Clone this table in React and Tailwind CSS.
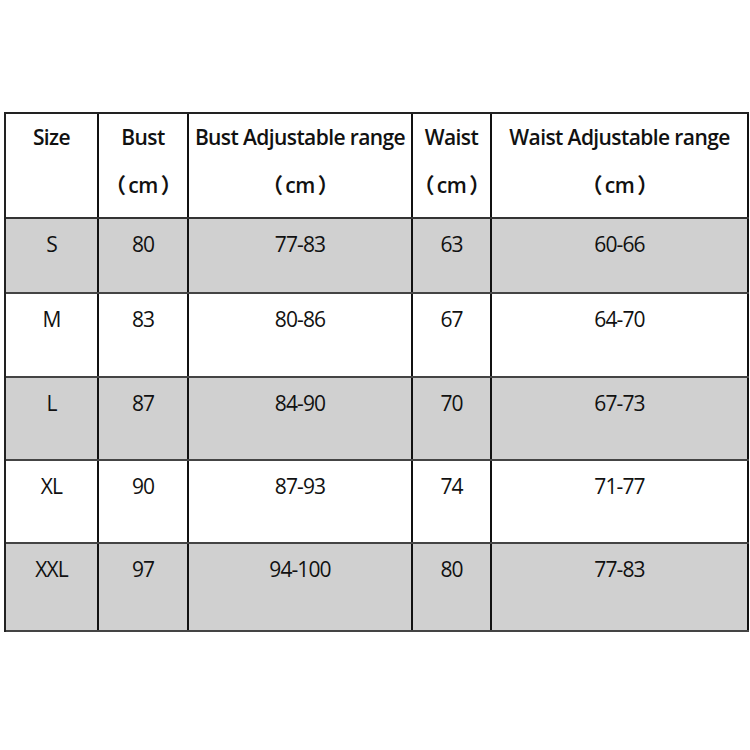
const headers = [
  ["Size", false],
  ["Bust", true],
  ["Bust Adjustable range", true],
  ["Waist", true],
  ["Waist Adjustable range", true],
];

const rows = [
  { cells: ["S", "80", "77-83", "63", "60-66"], h: "h-[75px]", gray: true },
  { cells: ["M", "83", "80-86", "67", "64-70"], h: "h-[84px]", gray: false },
  { cells: ["L", "87", "84-90", "70", "67-73"], h: "h-[83px]", gray: true },
  { cells: ["XL", "90", "87-93", "74", "71-77"], h: "h-[83px]", gray: false },
  { cells: ["XXL", "97", "94-100", "80", "77-83"], h: "h-[88px]", gray: true },
];

const widths = ["w-[93px]", "w-[90px]", "w-[224px]", "w-[79px]", "w-[257px]"];

const font = { fontFamily: '"Open Sans", "Noto Sans CJK SC", sans-serif' };

export default function App() {
  return (
    <div className="w-[750px] h-[750px] bg-white pt-[112px] pl-[4px]" style={font}>
      <div className="w-[745px] border-t-2 border-l-2 border-[#222] text-[#111]">
        <div className="flex h-[105px] border-b-2 border-[#333]">
          {headers.map(([a, cm], i) => (
            <div
              key={i}
              className={`${widths[i]} shrink-0 border-r-2 border-[#111] flex flex-col items-center pt-[8px] font-semibold text-[21px] tracking-[-0.6px]`}
            >
              <div className="leading-[30px] whitespace-nowrap">{a}</div>
              {cm && (
                <div className="leading-[30px] mt-[18px] whitespace-nowrap flex">
                  <span>（</span>
                  <span className="mx-[3px]">cm</span>
                  <span>）</span>
                </div>
              )}
            </div>
          ))}
        </div>
        {rows.map((r, ri) => (
          <div
            key={ri}
            className={`flex ${r.h} border-b-2 border-[#444] ${r.gray ? "bg-[#d0d0d0]" : "bg-white"}`}
          >
            {r.cells.map((c, ci) => (
              <div
                key={ci}
                className={`${widths[ci]} shrink-0 border-r-2 border-[#111] flex justify-center pt-[10px] text-[21px] leading-[30px] tracking-[-0.9px]`}
              >
                {c}
              </div>
            ))}
          </div>
        ))}
      </div>
    </div>
  );
}
